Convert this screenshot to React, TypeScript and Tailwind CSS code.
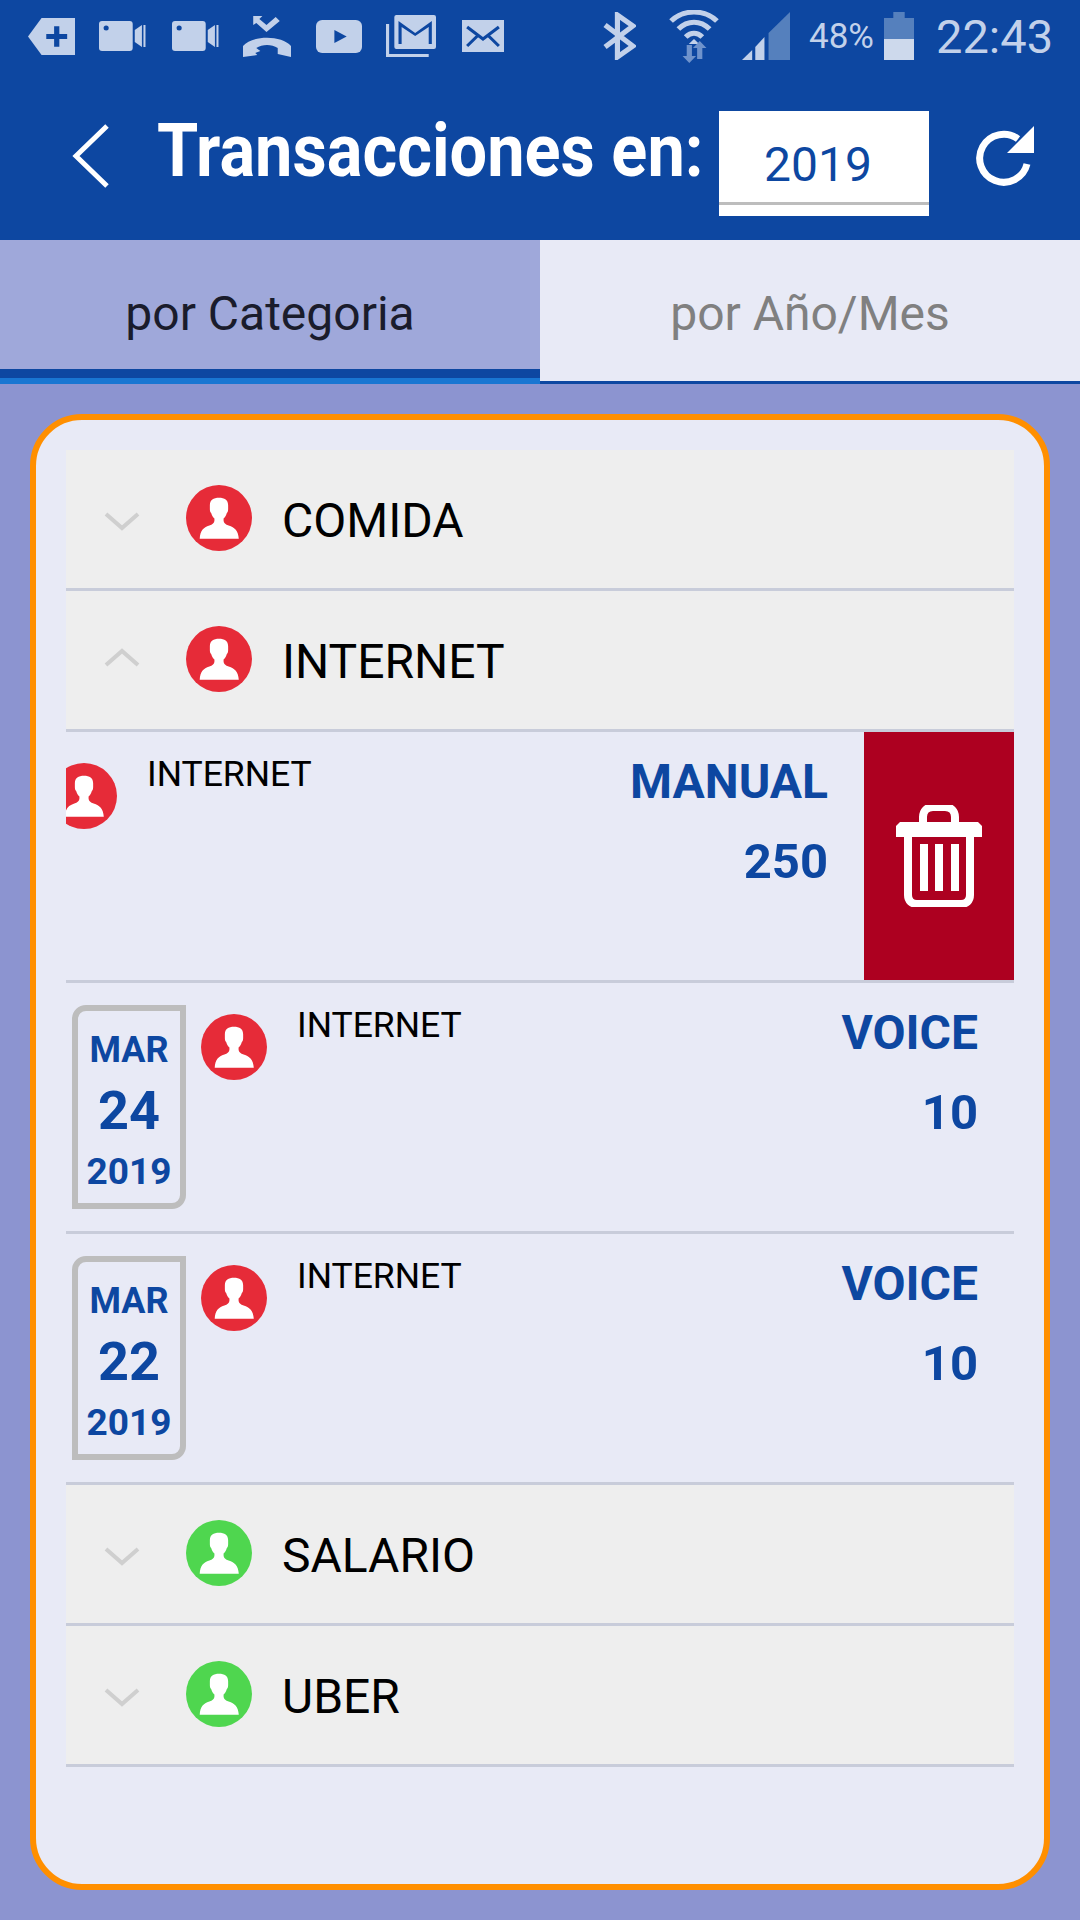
const Avatar = ({ color, className = "" }: { color: string; className?: string }) => (
  <svg viewBox="0 0 65 65" className={`h-[66px] w-[66px] shrink-0 ${className}`}>
    <circle cx="32.5" cy="32.5" r="32.5" fill={color} />
    <path
      d="M32.5 12.500C27 12.500 23.500 14.500 23.500 20V24C23.500 26 24 27 25 28C25.500 30 26.500 31.500 28 33V35C28 37.500 26 39 23 40C17 42 14 45 13.500 53H52C51.500 45 48 42 42 40C39 39 37 37.500 37 35V33C38.500 31.500 39.500 30 40 28C41 27 41.500 26 41.500 24V20C41.500 14.500 38 12.500 32.500 12.500Z"
      fill="#fff"
    />
  </svg>
);

const Chevron = ({ up = false }: { up?: boolean }) => (
  <svg viewBox="0 0 36 20" className="h-[20px] w-[36px] shrink-0">
    <path d={up ? "M2 18L18 4L34 18" : "M2 3L18 17L34 3"} fill="none" stroke="#cfcfcf" strokeWidth="4" />
  </svg>
);

const CategoryRow = ({ name, color, up = false }: { name: string; color: string; up?: boolean }) => (
  <div className="flex h-[141px] items-center border-b-[3px] border-[#c8ccda] bg-[#eeeeee]">
    <div className={`ml-[38px] ${up ? "-mt-[6px]" : "mt-[3px]"}`}>
      <Chevron up={up} />
    </div>
    <Avatar color={color} className="-mt-[2px] ml-[46px]" />
    <span className="ml-[30px] mt-[3px] text-[48px] leading-none text-black">{name}</span>
  </div>
);

const Amount = ({ label, value, className = "" }: { label: string; value: string; className?: string }) => (
  <div className={`flex flex-col items-end font-bold text-[#0d47a1] ${className}`}>
    <span className="text-[48px] leading-[56px]">{label}</span>
    <span className="mt-[24px] text-[49px] leading-[56px]">{value}</span>
  </div>
);

const DateBox = ({ day }: { day: string }) => (
  <div className="ml-[6px] mt-[22px] flex h-[204px] w-[114px] shrink-0 flex-col items-center rounded-tl-[14px] rounded-br-[14px] border-[6px] border-[#bdbdbd] font-bold text-[#0d47a1]">
    <span className="mt-[19px] text-[36px] leading-[40px]">MAR</span>
    <span className="mt-[11px] text-[54px] leading-[60px]">{day}</span>
    <span className="mt-[11px] text-[37px] leading-[40px]">2019</span>
  </div>
);

const TransactionRow = ({ day }: { day: string }) => (
  <div className="flex h-[251px] border-b-[3px] border-[#c8ccda]">
    <DateBox day={day} />
    <Avatar color="#e62b38" className="ml-[15px] mt-[31px]" />
    <span className="ml-[30px] mt-[20px] text-[35.5px] leading-[44px] text-black">INTERNET</span>
    <Amount label="VOICE" value="10" className="ml-auto mr-[36px] mt-[22px]" />
  </div>
);

const StatusIcons = () => (
  <>
    <svg viewBox="0 0 45 36" preserveAspectRatio="none" className="h-[37px] w-[47px] shrink-0">
      <path d="M13 0H45V36H13L0 18Z" fill="#c2d1ea" />
      <path d="M25 8h5v7.500h7.500v5H30v7.500h-5v-7.500h-7.500v-5H25Z" fill="#0d47a1" />
    </svg>
    <svg viewBox="0 0 46 30" preserveAspectRatio="none" className="ml-[24px] h-[30px] w-[47px] shrink-0">
      <rect width="33" height="30" rx="3" fill="#c2d1ea" />
      <circle cx="7" cy="7" r="2.500" fill="#0d47a1" />
      <path d="M35 9L42 4V26L35 21Z" fill="#c2d1ea" />
      <rect x="43.500" y="4" width="2" height="22" fill="#c2d1ea" />
    </svg>
    <svg viewBox="0 0 46 30" preserveAspectRatio="none" className="ml-[26px] h-[30px] w-[47px] shrink-0">
      <rect width="33" height="30" rx="3" fill="#c2d1ea" />
      <circle cx="7" cy="7" r="2.500" fill="#0d47a1" />
      <path d="M35 9L42 4V26L35 21Z" fill="#c2d1ea" />
      <rect x="43.500" y="4" width="2" height="22" fill="#c2d1ea" />
    </svg>
    <svg viewBox="0 0 47 42" preserveAspectRatio="none" className="ml-[24px] h-[42px] w-[48px] shrink-0">
      <path d="M10 1H19L16 4L23 10L32 2L36 6L23 17L13 8L10 10Z" fill="#c2d1ea" />
      <path d="M0 42V31C9 20 38 20 47 31V42L34 39V33C28 29 19 29 13 33L17 36L12 38L14 40Z" fill="#c2d1ea" />
    </svg>
    <svg viewBox="0 0 45 33" preserveAspectRatio="none" className="ml-[25px] h-[33px] w-[46px] shrink-0">
      <rect width="45" height="33" rx="6" fill="#c2d1ea" />
      <path d="M18 10L30 16.500L18 23Z" fill="#0d47a1" />
    </svg>
    <svg viewBox="0 0 48 42" preserveAspectRatio="none" className="ml-[24px] h-[42px] w-[50px] shrink-0">
      <rect x="8" y="0" width="40" height="34" rx="2" fill="#c2d1ea" />
      <path d="M12 29V6L28 18L44 6V29H41V12L28 21L15 12V29Z" fill="#0d47a1" />
      <path d="M1.500 9V40.500H41" fill="none" stroke="#c2d1ea" strokeWidth="3" />
    </svg>
    <svg viewBox="0 0 41 32" preserveAspectRatio="none" className="ml-[26px] h-[32px] w-[42px] shrink-0">
      <rect width="41" height="32" fill="#c2d1ea" />
      <path d="M5 7L20.500 19L36 7M5 26L15 16M36 26L26 16" fill="none" stroke="#0d47a1" strokeWidth="3" />
    </svg>
    <svg viewBox="0 0 32 48" preserveAspectRatio="none" className="ml-[99px] h-[48px] w-[33px] shrink-0">
      <path d="M2 13L29 34L14 45V3L29 14L2 35" fill="none" stroke="#c2d1ea" strokeWidth="5" />
    </svg>
    <svg viewBox="0 0 48 53" preserveAspectRatio="none" className="ml-[33px] h-[53px] w-[50px] shrink-0">
      <path d="M2 11C14 -1 34 -1 46 11M9 19C18 10 30 10 39 19M16 27C21 22 27 22 32 27" fill="none" stroke="#c2d1ea" strokeWidth="5" />
      <path d="M24 29L19 34H29Z" fill="#c2d1ea" />
      <path d="M17 35H22V46H26L19.500 53L13 46H17Z" fill="#6f93cc" />
      <path d="M27 49V38H23L29.500 31L36 38H32V49Z" fill="#6f93cc" />
    </svg>
    <svg viewBox="0 0 47 48" preserveAspectRatio="none" className="ml-[23px] h-[48px] w-[48px] shrink-0">
      <path d="M0 48L10 38V48Z" fill="#c2d1ea" />
      <path d="M13 35L22 25V48H13Z" fill="#c2d1ea" />
      <path d="M26 21L47 0V48H26Z" fill="#5580bd" />
    </svg>
    <span className="ml-[19px] w-[64px] whitespace-nowrap text-[35px] leading-none text-[#c2d1ea]">48%</span>
    <svg viewBox="0 0 29 48" preserveAspectRatio="none" className="ml-[11px] h-[48px] w-[30px] shrink-0">
      <rect x="9" y="0" width="11" height="6" fill="#5580bd" />
      <rect x="0" y="6" width="29" height="21" fill="#5580bd" />
      <rect x="0" y="27" width="29" height="21" fill="#cdd9ec" />
    </svg>
    <span className="ml-[22px] text-[47px] leading-none text-[#c2d1ea]">22:43</span>
  </>
);

export default function App() {
  return (
    <div className="flex h-[1920px] w-[1080px] flex-col overflow-hidden bg-[#8c94d0] font-['Roboto',sans-serif]">
      <header className="h-[240px] shrink-0 bg-[#0d47a1]">
        <div className="flex h-[72px] items-center pl-[28px]">
          <StatusIcons />
        </div>
        <div className="flex items-start">
          <svg viewBox="0 0 38 64" preserveAspectRatio="none" className="ml-[72px] mt-[52px] h-[64px] w-[38px] shrink-0">
            <path d="M35 2L4 32L35 62" fill="none" stroke="#fff" strokeWidth="5" />
          </svg>
          <h1 className="ml-[47px] mt-[36px] w-[562px] origin-left scale-x-[0.889] whitespace-nowrap text-[75px] font-bold leading-[84px] text-white">
            Transacciones en:
          </h1>
          <div className="mt-[39px] flex h-[105px] w-[210px] shrink-0 flex-col bg-white">
            <span className="ml-[45px] mt-[27px] text-[48px] leading-[54px] text-[#0d47a1]">2019</span>
            <div className="mt-[10px] h-[3px] bg-[#bdbdbd]" />
          </div>
          <svg viewBox="0 0 60 62" className="ml-[45px] mt-[54px] h-[62px] w-[60px] shrink-0">
            <path d="M53 38A24 24 0 1 1 44 13" fill="none" stroke="#fff" strokeWidth="7" />
            <path d="M60 0V27H33Z" fill="#fff" />
          </svg>
        </div>
      </header>

      <nav className="flex h-[144px] shrink-0">
        <div className="flex h-full w-[540px] flex-col bg-[#9fa8da]">
          <div className="flex h-[129px] items-center justify-center pt-[18px] text-[48px] text-[#1a1c2c]">por Categoria</div>
          <div className="h-[9px] bg-[#0d47a1]" />
          <div className="h-[6px] bg-[#1976d2]" />
        </div>
        <div className="flex h-full w-[540px] flex-col border-b-[3px] border-[#0d47a1] bg-[#e8eaf6]">
          <div className="flex h-[129px] items-center justify-center pt-[18px] text-[48px] text-[#808080]">por Año/Mes</div>
        </div>
      </nav>

      <main className="px-[30px] pt-[30px]">
        <div className="h-[1476px] rounded-[52px] border-[6px] border-[#ff8f00] bg-[#e8eaf6] px-[30px] pt-[30px]">
          <CategoryRow name="COMIDA" color="#e62b38" />
          <CategoryRow name="INTERNET" color="#e62b38" up />

          <div className="flex h-[251px] overflow-hidden border-b-[3px] border-[#c8ccda]">
            <Avatar color="#e62b38" className="-ml-[15px] mt-[31px]" />
            <span className="ml-[30px] mt-[20px] text-[35.5px] leading-[44px] text-black">INTERNET</span>
            <Amount label="MANUAL" value="250" className="ml-auto mr-[36px] mt-[22px]" />
            <div className="flex w-[150px] shrink-0 items-center justify-center bg-[#ad0020]">
              <svg viewBox="0 0 86 102" className="h-[102px] w-[86px]">
                <path d="M27 17V12C27 6 31 2 37 2H49C55 2 59 6 59 12V17" fill="none" stroke="#fff" strokeWidth="8" />
                <path d="M4 17H82L86 21V32H0V21Z" fill="#fff" />
                <path d="M12 30V90C12 96 16 99 21 99H65C70 99 74 96 74 90V30" fill="none" stroke="#fff" strokeWidth="8" />
                <path d="M24 39H32V86H24ZM39 39H47V86H39ZM55 39H63V86H55Z" fill="#fff" />
              </svg>
            </div>
          </div>

          <TransactionRow day="24" />
          <TransactionRow day="22" />

          <CategoryRow name="SALARIO" color="#4fd64f" />
          <CategoryRow name="UBER" color="#4fd64f" />
        </div>
      </main>
    </div>
  );
}
